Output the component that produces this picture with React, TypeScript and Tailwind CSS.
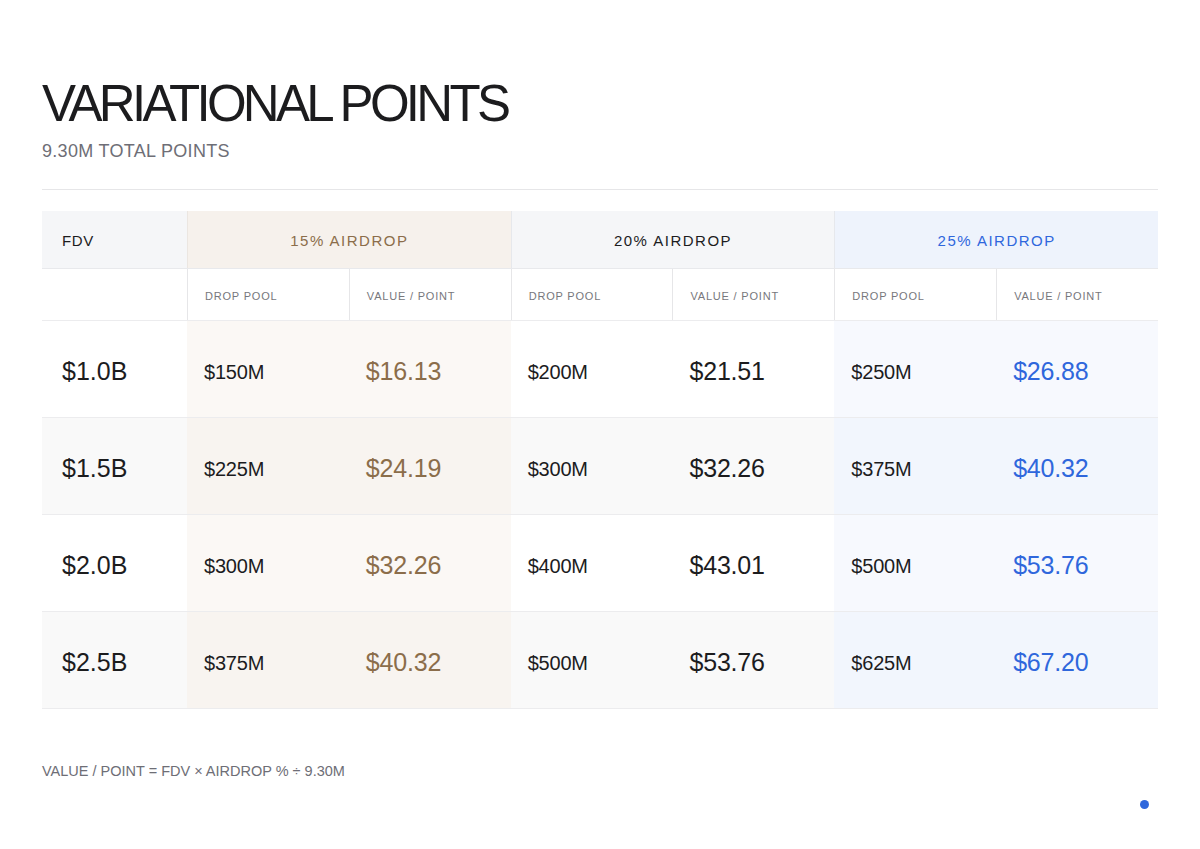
import React from 'react';

const rows = [
  { fdv: '$1.0B', cells: ['$150M', '$16.13', '$200M', '$21.51', '$250M', '$26.88'] },
  { fdv: '$1.5B', cells: ['$225M', '$24.19', '$300M', '$32.26', '$375M', '$40.32'] },
  { fdv: '$2.0B', cells: ['$300M', '$32.26', '$400M', '$43.01', '$500M', '$53.76'] },
  { fdv: '$2.5B', cells: ['$375M', '$40.32', '$500M', '$53.76', '$625M', '$67.20'] },
];

// per-group background for odd / even data rows
const groupBg = [
  ['bg-[#fbf8f5]', 'bg-[#f8f4f0]'],
  ['bg-white', 'bg-[#f9f9f9]'],
  ['bg-[#f7f9fe]', 'bg-[#f2f6fd]'],
];
const valueColor = ['text-[#8b6d4a]', 'text-[#1c1c1e]', 'text-[#2f67dc]'];

const gridCols = 'grid grid-cols-[145px_repeat(6,minmax(0,1fr))]';

export default function App() {
  return (
    <main className="min-h-screen bg-white px-[42px] pt-[78px] font-['Liberation_Sans',Arial,sans-serif] text-[#1c1c1e]">
      <h1 className="text-[51px] leading-[51px] tracking-[-3.7px]">VARIATIONAL POINTS</h1>
      <p className="mt-[10px] text-[18px] leading-[24px] tracking-[0.3px] text-[#6e6e76]">9.30M TOTAL POINTS</p>
      <div className="mt-[26px] h-px bg-[#e6e6e8]" />

      <div className="mt-[21px]">
        {/* group header */}
        <div className={`${gridCols} h-[58px] border-b border-[#e8e9ec] text-[15px]`}>
          <div className="flex items-center bg-[#f5f6f8] pl-5 pt-1 tracking-[0.6px]">FDV</div>
          <div className="col-span-2 flex items-center justify-center border-l border-[#ebe6e1] bg-[#f6f1ec] pt-1 tracking-[1.5px] text-[#8b6d4a]">
            15% AIRDROP
          </div>
          <div className="col-span-2 flex items-center justify-center border-l border-[#e6e8ec] bg-[#f5f6f8] pt-1 tracking-[1.5px]">
            20% AIRDROP
          </div>
          <div className="col-span-2 flex items-center justify-center border-l border-[#e6e8ec] bg-[#eef3fc] pt-1 tracking-[1.5px] text-[#2f67dc]">
            25% AIRDROP
          </div>
        </div>

        {/* sub header */}
        <div className={`${gridCols} h-[52px] border-b border-[#ececee] text-[11px] tracking-[0.8px] text-[#77777c]`}>
          <div />
          {['DROP POOL', 'VALUE / POINT', 'DROP POOL', 'VALUE / POINT', 'DROP POOL', 'VALUE / POINT'].map((t, i) => (
            <div key={i} className="flex items-center border-l border-[#e6e6e8] pl-[17px] pt-1">
              {t}
            </div>
          ))}
        </div>

        {rows.map((r, ri) => (
          <div key={r.fdv} className={`${gridCols} h-[97px] border-b border-[#ececee]`}>
            <div className={`flex items-center pl-5 pt-[5px] text-[25px] ${ri % 2 ? 'bg-[#f9f9f9]' : 'bg-white'}`}>{r.fdv}</div>
            {r.cells.map((c, ci) => {
              const g = Math.floor(ci / 2);
              const bg = groupBg[g][ri % 2];
              return ci % 2 === 0 ? (
                <div key={ci} className={`flex items-center pl-[17px] pt-[5px] text-[20px] tracking-[-0.2px] ${bg}`}>
                  {c}
                </div>
              ) : (
                <div key={ci} className={`flex items-center pl-[17px] pt-[5px] text-[25px] tracking-[-0.2px] ${bg} ${valueColor[g]}`}>
                  {c}
                </div>
              );
            })}
          </div>
        ))}
      </div>

      <p className="mt-[52px] text-[14.5px] leading-[20px] text-[#6e6e76]">VALUE / POINT = FDV × AIRDROP % ÷ 9.30M</p>
      <div className="mt-[19px] flex justify-end pr-[9.5px]">
        <span className="h-[9px] w-[9px] rounded-full bg-[#2f67dc]" />
      </div>
    </main>
  );
}
